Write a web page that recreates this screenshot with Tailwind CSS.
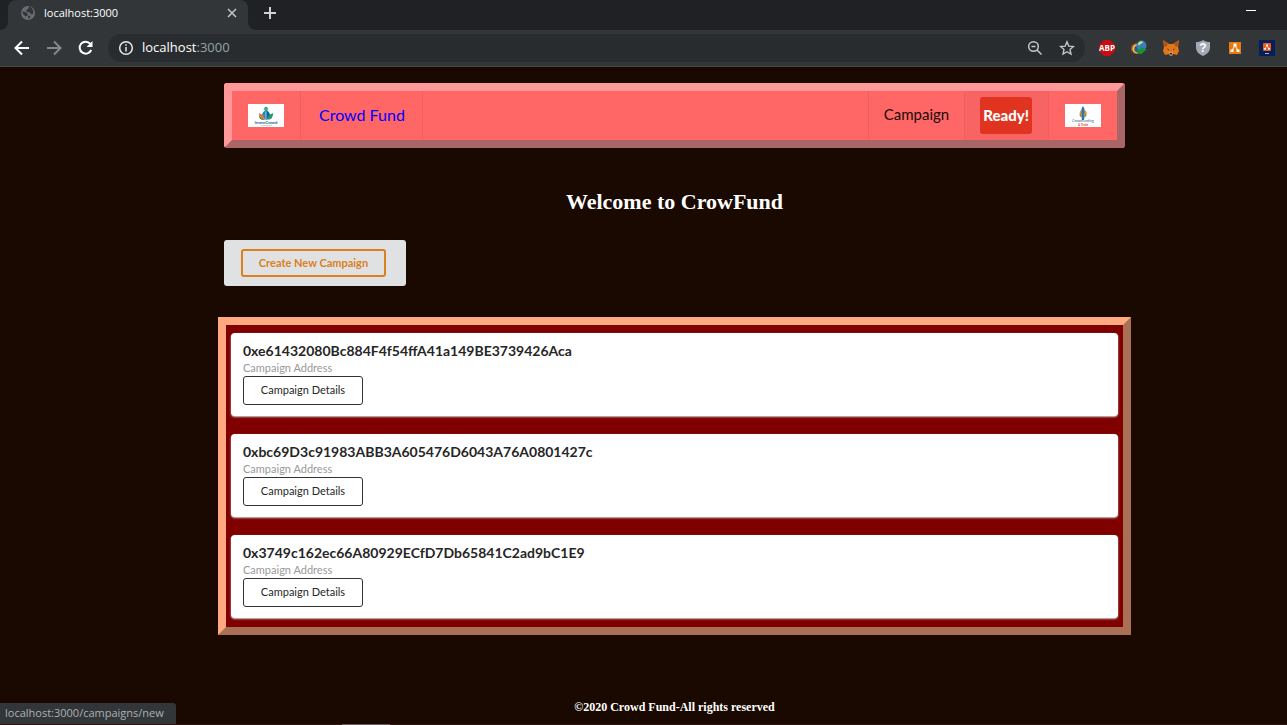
<!DOCTYPE html>
<html lang="en">
<head>
<meta charset="utf-8">
<meta name="viewport" content="width=device-width, initial-scale=1">
<title>localhost:3000</title>
<script src="https://cdn.jsdelivr.net/npm/@tailwindcss/browser@4"></script>
</head>
<body class="flex min-h-screen flex-col bg-[#1a0900] font-['Lato',sans-serif]">
<header class="font-['Open_Sans',sans-serif] text-[11px]">
  <div class="flex h-[30px] items-stretch bg-[#202124]">
    <div class="w-2 bg-[#323639]"><div class="h-full rounded-br-lg bg-[#202124]"></div></div>
    <div class="flex w-60 items-center rounded-t-lg bg-[#323639] pr-[10px] pb-1 pl-3 text-white">
      <svg class="mr-2 size-4" viewBox="0 0 16 16"><circle cx="8" cy="8" r="7" fill="#6a6e72"/><path d="M2 6.500 5.500 7 8 9 7 11 5.500 11.500 3 9ZM9 1.500 8 4l-2 1 1 2 3 .5 1 2 2-.5c1.500-3-1-7-4-7.500ZM8 11l2-.5.5 1.500L8.500 14Z" fill="#323639"/></svg>
      <span class="flex-1">localhost:3000</span>
      <button aria-label="Close tab"><svg class="size-3" viewBox="0 0 12 12"><path d="m2 2 8 8M10 2l-8 8" stroke="#c4c7ca" stroke-width="1.500"/></svg></button>
    </div>
    <div class="w-2 bg-[#323639]"><div class="h-full rounded-bl-lg bg-[#202124]"></div></div>
    <button class="ml-1 pb-1 pl-[3px]" aria-label="New tab"><svg class="size-3.5" viewBox="0 0 14 14"><path d="M7 1v12M1 7h12" stroke="#d0d2d4" stroke-width="2"/></svg></button>
    <button class="mr-[31px] mb-2 ml-auto" aria-label="Minimize"><svg class="h-3 w-2.5" viewBox="0 0 10 12"><path d="M0 5.500h10" stroke="#fff"/></svg></button>
  </div>
  <div class="flex h-[37px] items-center border-b border-[#45494c] bg-[#323639]">
    <div class="ml-3.5 flex gap-4">
      <button aria-label="Back"><svg class="size-4" viewBox="0 0 16 16" fill="none" stroke="#fff" stroke-width="2"><path d="M15 8H2M8 1.500 1.500 8 8 14.500"/></svg></button>
      <button aria-label="Forward"><svg class="size-4" viewBox="0 0 16 16" fill="none" stroke="#85888b" stroke-width="2"><path d="M1 8h13M8 1.500 14.500 8 8 14.500"/></svg></button>
      <button aria-label="Reload"><svg class="size-4" viewBox="0 0 16 16"><path d="M13.200 10A6 6 0 1 1 12.300 3.800" fill="none" stroke="#fff" stroke-width="2"/><path d="M14.500 1v6h-6Z" fill="#fff"/></svg></button>
    </div>
    <div class="ml-3.5 flex h-7 flex-1 items-center rounded-full bg-[#282c2f] px-2.5 text-[13px]">
      <svg class="mr-2 size-4" viewBox="0 0 16 16" fill="none" stroke="#e8eaed" stroke-width="1.500"><circle cx="8" cy="8" r="6.300"/><path d="M8 7v4.500M8 4.200v1.600"/></svg>
      <div class="flex-1 text-white outline-none" role="textbox" contenteditable="true" spellcheck="false" aria-label="Address">localhost<span class="text-[#9aa0a6]">:3000</span></div>
      <button aria-label="Zoom" class="mr-4"><svg class="size-4" viewBox="0 0 16 16" fill="none" stroke="#c4c7ca" stroke-width="1.500"><circle cx="6.500" cy="6.500" r="4.800"/><path d="m10 10 4.500 4.500M4.500 6.500h4"/></svg></button>
      <button aria-label="Bookmark"><svg class="size-4" viewBox="0 0 16 16" fill="none" stroke="#c4c7ca" stroke-width="1.400"><path d="m8 1.800 1.800 4.300 4.700.4L11 9.600l1 4.500-4-2.400-4 2.400 1-4.500-3.500-3.100 4.700-.4Z"/></svg></button>
    </div>
    <div class="mr-3 ml-3.5 flex gap-4">
      <button aria-label="ABP"><svg class="size-4" viewBox="0 0 16 16"><path d="M5 0h6l5 5v6l-5 5H5l-5-5V5Z" fill="#c70d12"/><text x="8" y="11" text-anchor="middle" font-family="Open Sans" font-weight="700" font-size="8" fill="#fff">ABP</text></svg></button>
      <button aria-label="Download manager"><svg class="size-4" viewBox="0 0 16 16"><circle cx="5.500" cy="8.500" r="5.500" fill="#b8402a"/><circle cx="6" cy="8.800" r="4.600" fill="#edc72c"/><circle cx="6.500" cy="9" r="3.200" fill="#1d5fa0"/><circle cx="10.500" cy="5.500" r="5" fill="#397fb5"/><path d="M7 4c1-3 4-3.500 5-2 0 2-3 1-4 4Z" fill="#c6df8a"/><path d="m5 8 4 2 2-3 2 2h3l-6 5.500-5-2.500 2-1Z" fill="#159331"/></svg></button>
      <button aria-label="MetaMask"><svg class="size-4" viewBox="0 0 16 16"><path d="m0 0 6 4h4l6-4-1 7 1 4-2 4-4-1-1 2H7l-1-2-4 1-2-4 1-4Z" fill="#e2761b"/><path d="m0 0 5 4-2 3-2-1ZM16 0l-5 4 2 3 2-1Z" fill="#ad5416"/><path d="m4 8.500 2 .8-.5 1.200ZM12 8.500l-2 .8.5 1.200Z" fill="#233447"/><path d="M6 12.500h4l-.5 2.500h-3Z" fill="#d7c1b3"/><path d="M7 13h2l.5 1.500h-3Z" fill="#161616"/></svg></button>
      <button aria-label="Shield"><svg class="size-4" viewBox="0 0 16 16"><path d="M8 0c2 1.500 4 2 7 2v5c0 5-3 7-7 9-4-2-7-4-7-9V2c3 0 5-.5 7-2Z" fill="#a3a8b5"/><text x="8" y="12" text-anchor="middle" font-family="Liberation Sans" font-weight="700" font-size="12" fill="#fff">?</text></svg></button>
      <button aria-label="Diagrams"><svg class="size-4" viewBox="0 0 16 16"><rect x="2" y="2" width="12" height="12" fill="#e87b10"/><path d="M8 5 5 11M8 5l3 6" stroke="#fff"/><path d="M6.500 3.500h3v3h-3ZM3.500 9.500h3v2.500h-3ZM9.500 9.500h3v2.500h-3Z" fill="#fff"/></svg></button>
      <button aria-label="Diagrams desktop"><svg class="size-4" viewBox="0 0 16 16"><path d="M0 0h16v16H0Z" fill="#04205c"/><rect x="4" y="3" width="8" height="8" rx="1" fill="#f05a18"/><path d="M8 5.500 6 9M8 5.500 10 9" stroke="#fff" stroke-width=".6"/><path d="M7 4.500h2v1.500H7ZM5 8h2v1.500H5ZM9 8h2v1.500H9Z" fill="#fff"/><path d="M6 13.500h4" stroke="#a9b5cc"/></svg></button>
    </div>
  </div>
</header>

<main class="flex flex-1 flex-col pt-4 pr-[162px] pl-56">
  <nav class="flex rounded-[3px] border-8 border-t-[#ff9999] border-r-[#aa6666] border-b-[#aa6666] border-l-[#ff9999] bg-[#ff6666] text-[15px]">
    <a href="#" aria-label="Home" class="flex h-[49px] items-center border-r border-[#ee5f5f] px-4">
      <svg class="h-[23px] w-9 bg-white" viewBox="0 0 36 23"><circle cx="18" cy="4.500" r="1.800" fill="#39a982"/><path d="M15 4.500 18 6l3-1.500L18 8Z" fill="#4cb58a"/><path d="M17.700 6v10c-5-2-5-7 0-10Z" fill="#1d8dc4"/><path d="M18.300 6v10c5-2 5-7 0-10Z" fill="#116596"/><path d="M17 15.500c-4 .5-6-1.500-6-6.500 3 1 5 2.500 6 6.500Z" fill="#e87838"/><path d="M19 15.500c4 .5 6-1.500 6-6.500-3 1-5 2.500-6 6.500Z" fill="#259a77"/><path d="M11 11c1 3 3 4 6 4.500-3 1-6 0-6-4.500Z" fill="#228a51"/><text x="18" y="20" text-anchor="middle" font-family="Lato" font-size="4" font-weight="700" fill="#235c88">InvestCrowd</text><path d="M13 21.500h11" stroke="#8dc7c9" stroke-width=".6"/></svg>
    </a>
    <a href="#" class="flex items-center border-r border-[#ee5f5f] pr-[17px] pb-0.5 pl-[18px] text-base text-[#0000ff]">Crowd Fund</a>
    <a href="#" class="ml-auto flex items-center border-x border-[#ee5f5f] px-[15px] pb-0.5 text-[#1a0a0a]">Campaign</a>
    <div class="flex items-center border-r border-[#ee5f5f] bg-[#f86363] pr-4 pl-[15px]"><button class="h-[37px] rounded-[3px] bg-[#e03320] px-[3px] font-black text-white">Ready!</button></div>
    <a href="#" aria-label="Crowdfunding" class="flex items-center px-4">
      <svg class="h-[23px] w-9 bg-white" viewBox="0 0 36 23"><path d="M18 2c2 3 2.500 6 1 14h-2c-1.500-8-1-11 1-14Z" fill="#3871a2"/><path d="M16 6c-2 3-2 5 1 7Z" fill="#e18a2f"/><path d="M20 6c3 3 2 5-1 7Z" fill="#dfa02b"/><path d="M15 10c-1 2 0 3 2 3ZM21 10c1 2 0 3-2 3Z" fill="#409773"/><text x="18" y="18" text-anchor="middle" font-family="Lato" font-size="3.500" fill="#3b6188">Crowdfunding</text><text x="18" y="21.500" text-anchor="middle" font-family="Lato" font-size="3" font-weight="700" fill="#d14e3c">&amp; Trade</text></svg>
    </a>
  </nav>

  <h1 class="mt-9 text-center font-['Liberation_Serif',serif] text-[22px] leading-9 font-bold text-white">Welcome to CrowFund</h1>

  <div class="mt-5 self-start rounded-[3px] bg-[#e0e1e2] py-[9px] pr-5 pl-[17px]">
    <button class="block h-7 w-[145px] rounded-[3px] border-2 border-[#da801d] text-[11px] font-bold text-[#da801d]">Create New Campaign</button>
  </div>

  <section class="-mx-1.5 mt-[31px] flex flex-col gap-[18px] border-8 border-t-[#ffa97f] border-r-[#aa7055] border-b-[#aa7055] border-l-[#ffa97f] bg-[#800000] px-[5px] pt-2 pb-[9px]">
    <article class="h-[83px] rounded-[4px] bg-white px-3 pt-2.5 shadow-[0_1px_2px_#d4d4d5]">
      <h2 class="text-sm leading-4 font-bold text-[#262626]">0xe61432080Bc884F4f54ffA41a149BE3739426Aca</h2>
      <p class="text-[11px] leading-[17px] text-[#999]">Campaign Address</p>
      <button class="block h-[29px] w-[120px] rounded-[3px] border border-[#333] text-[11px] text-[#262626]">Campaign Details</button>
    </article>
    <article class="h-[83px] rounded-[4px] bg-white px-3 pt-2.5 shadow-[0_1px_2px_#d4d4d5]">
      <h2 class="text-sm leading-4 font-bold text-[#262626]">0xbc69D3c91983ABB3A605476D6043A76A0801427c</h2>
      <p class="text-[11px] leading-[17px] text-[#999]">Campaign Address</p>
      <button class="block h-[29px] w-[120px] rounded-[3px] border border-[#333] text-[11px] text-[#262626]">Campaign Details</button>
    </article>
    <article class="h-[83px] rounded-[4px] bg-white px-3 pt-2.5 shadow-[0_1px_2px_#d4d4d5]">
      <h2 class="text-sm leading-4 font-bold text-[#262626]">0x3749c162ec66A80929ECfD7Db65841C2ad9bC1E9</h2>
      <p class="text-[11px] leading-[17px] text-[#999]">Campaign Address</p>
      <button class="block h-[29px] w-[120px] rounded-[3px] border border-[#333] text-[11px] text-[#262626]">Campaign Details</button>
    </article>
  </section>

  <footer class="mt-auto pb-2.5 text-center font-['Liberation_Serif',serif] text-xs leading-4 font-bold text-white">©2020 Crowd Fund-All rights reserved</footer>
</main>
<div class="fixed bottom-px left-0 flex h-[21px] items-center rounded-tr-[3px] bg-[#323639] pr-3 pl-[5px] font-['Open_Sans',sans-serif] text-[11px] text-[#adb0b3]">localhost:3000/campaigns/new</div>
<div class="fixed inset-x-0 bottom-0 h-px bg-[#301414]"><div class="ml-[342px] h-px w-12 bg-[#6b5b5b]"></div></div>
</body>
</html>
